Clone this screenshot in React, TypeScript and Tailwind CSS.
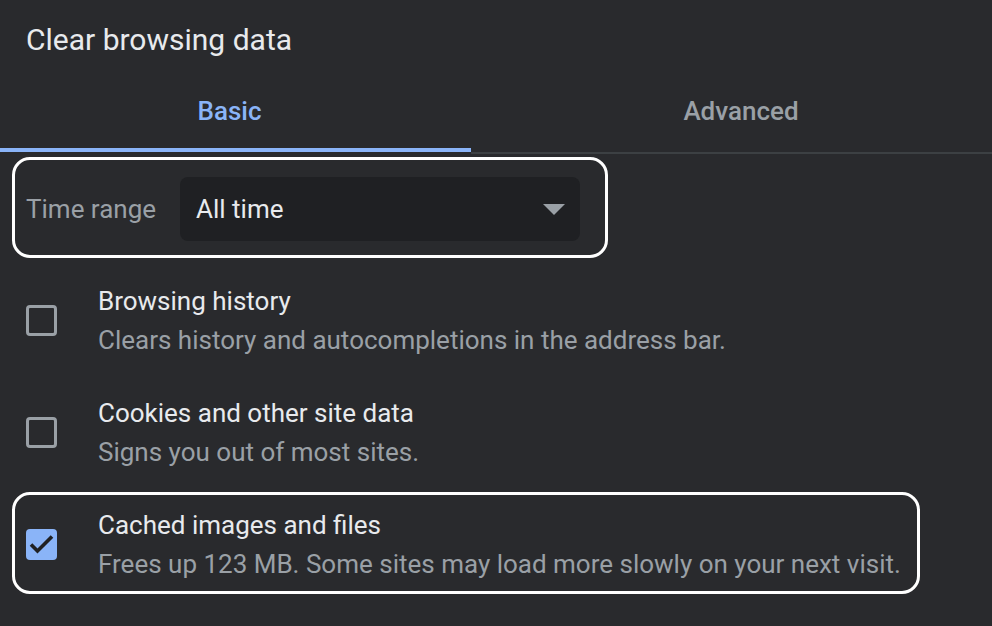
const rows = [
  {
    title: 'Browsing history',
    sub: 'Clears history and autocompletions in the address bar.',
    checked: false,
  },
  {
    title: 'Cookies and other site data',
    sub: 'Signs you out of most sites.',
    checked: false,
  },
  {
    title: 'Cached images and files',
    sub: 'Frees up 123 MB. Some sites may load more slowly on your next visit.',
    checked: true,
  },
]

function Checkbox({ checked }: { checked: boolean }) {
  if (checked) {
    return (
      <div className="h-[31px] w-[31px] shrink-0 rounded-[4px] bg-[#8ab4f8]">
        <svg viewBox="0 0 31 31" className="h-[31px] w-[31px]">
          <polyline points="5,15.5 11.5,22 26,7.5" fill="none" stroke="#202124" strokeWidth="3.6" />
        </svg>
      </div>
    )
  }
  return <div className="h-[31px] w-[31px] shrink-0 rounded-[4px] border-[3px] border-[#9aa0a6]" />
}

export default function App() {
  return (
    <div
      className="h-[626px] w-[992px] overflow-hidden bg-[#292a2d] text-[#e8eaed]"
      style={{ fontFamily: 'Roboto, "Liberation Sans", sans-serif' }}
    >
      <div className="pl-[26px] pt-[22px] text-[30px] leading-[36px]">Clear browsing data</div>

      <div className="flex items-start">
        <div className="h-[94px] w-[471px] border-b-[4px] border-[#8ab4f8] pr-[12px] pt-[37px] text-center text-[26px] font-medium leading-[32px] text-[#8ab4f8]">
          Basic
        </div>
        <div className="h-[96px] flex-1 border-b-[2px] border-[#3c4043] pl-[19px] pt-[37px] text-center text-[26px] font-medium leading-[32px] text-[#9aa0a6]">
          Advanced
        </div>
      </div>

      <div className="ml-[12px] mt-[3px] flex h-[101px] w-[596px] items-start rounded-[18px] border-[3px] border-white pl-[11px] pt-[17px]">
        <div className="flex h-[64px] items-center">
          <div className="w-[154px] text-[26px] leading-[30px] text-[#9aa0a6]">Time range</div>
          <div className="flex h-[64px] w-[400px] items-center justify-between rounded-[8px] bg-[#1f2023] pl-[16px] pr-[15px]">
            <span className="text-[26px] leading-[30px]">All time</span>
            <svg viewBox="0 0 22 11" className="h-[11px] w-[22px]">
              <polygon points="0,0 22,0 11,11" fill="#9aa0a6" />
            </svg>
          </div>
        </div>
      </div>

      <div className="mt-[7px]">
        {rows.map((row) => (
          <div key={row.title} className="flex h-[112px] items-start px-[12px]">
            <div
              className={`mt-[3px] flex h-[102px] w-[908px] items-center rounded-[18px] border-[3px] pl-[11px] pt-[3px] ${
                row.checked ? 'border-white' : 'border-transparent'
              }`}
            >
              <Checkbox checked={row.checked} />
              <div className="ml-[41px] text-[26px] leading-[39px]">
                <div className="whitespace-nowrap text-[#e8eaed]">{row.title}</div>
                <div className="whitespace-nowrap text-[#9aa0a6]">{row.sub}</div>
              </div>
            </div>
          </div>
        ))}
      </div>
    </div>
  )
}
